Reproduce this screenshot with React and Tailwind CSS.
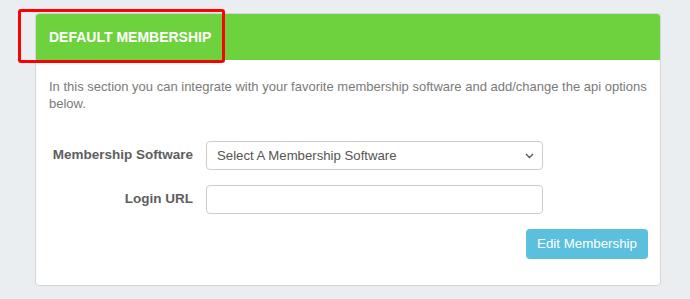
import React from "react";

export default function App() {
  return (
    <div
      className="relative w-[690px] h-[299px] bg-[#ebeef0] pt-[13px] pl-[35px] overflow-hidden"
      style={{ fontFamily: '"Liberation Sans", Arial, sans-serif' }}
    >
      <div className="w-[626px] h-[273px] bg-white border border-[#d3d6d9] rounded-[4px] overflow-hidden">
        <div className="h-[46px] bg-[#6ed13e] flex items-center px-[13px]">
          <span className="text-white font-bold text-[14px]">DEFAULT MEMBERSHIP</span>
        </div>
        <div className="px-[13px] pt-[18px]">
          <p className="text-[13px] leading-[17px] text-[#7a7a7a]">
            In this section you can integrate with your favorite membership software and add/change the api options below.
          </p>
          <div className="mt-[29px] flex items-center">
            <label className="w-[144px] text-right text-[13.5px] font-bold text-[#5e5e5e]">Membership Software</label>
            <div className="ml-[13px] w-[337px] h-[29px] border border-[#ccc] rounded-[4px] flex items-center justify-between pl-[10px] pr-[8px]">
              <span className="text-[13.2px] text-[#555]">Select A Membership Software</span>
              <svg width="9" height="6" viewBox="0 0 9 6" fill="none">
                <path d="M1 1l3.5 3.5L8 1" stroke="#555" strokeWidth="1.3" />
              </svg>
            </div>
          </div>
          <div className="mt-[15px] flex items-center">
            <label className="w-[144px] text-right text-[13.5px] font-bold text-[#5e5e5e]">Login URL</label>
            <div className="ml-[13px] w-[337px] h-[29px] border border-[#ccc] rounded-[4px]" />
          </div>
          <div className="mt-[15px] flex justify-end">
            <button className="w-[122px] h-[30px] bg-[#5bc0de] rounded-[4px] text-white text-[13.3px] mr-[-1px]">
              Edit Membership
            </button>
          </div>
        </div>
      </div>
      <div className="absolute left-[18px] top-[9px] w-[207px] h-[54px] border-[3px] border-[#ff0000] rounded-[3px]" />
    </div>
  );
}
